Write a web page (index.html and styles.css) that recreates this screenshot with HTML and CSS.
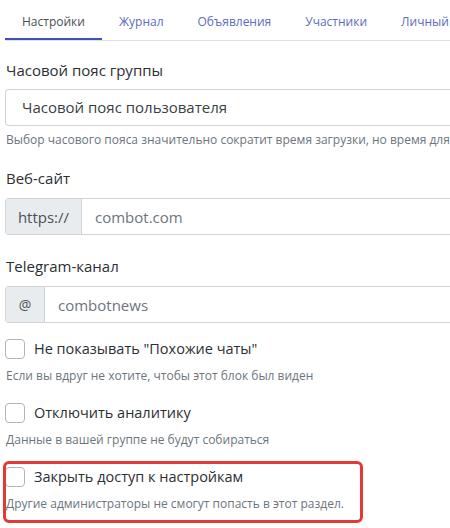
FILE: index.html
```html
<!DOCTYPE html>
<html lang="ru">
<head>
<meta charset="utf-8">
<link rel="stylesheet" href="styles.css">
</head>
<body>
<div class="page">
  <nav class="tabs">
    <a class="tab active">Настройки</a>
    <a class="tab">Журнал</a>
    <a class="tab">Объявления</a>
    <a class="tab">Участники</a>
    <a class="tab">Личный</a>
  </nav>

  <div class="group g-tz">
    <div class="label">Часовой пояс группы</div>
    <div class="select">Часовой пояс пользователя</div>
    <div class="help">Выбор часового пояса значительно сократит время загрузки, но время для</div>
  </div>

  <div class="group g-web">
    <div class="label">Веб-сайт</div>
    <div class="input-group">
      <span class="prefix p-https">https://</span>
      <span class="field">combot.com</span>
    </div>
  </div>

  <div class="group g-tg">
    <div class="label">Telegram-канал</div>
    <div class="input-group">
      <span class="prefix p-at">@</span>
      <span class="field f-at">combotnews</span>
    </div>
  </div>

  <div class="check c1">
    <div class="check-row"><span class="box"></span><span class="check-label">Не показывать "Похожие чаты"</span></div>
    <div class="help">Если вы вдруг не хотите, чтобы этот блок был виден</div>
  </div>

  <div class="check c2">
    <div class="check-row"><span class="box"></span><span class="check-label">Отключить аналитику</span></div>
    <div class="help">Данные в вашей группе не будут собираться</div>
  </div>

  <div class="check c3">
    <div class="check-row"><span class="box"></span><span class="check-label">Закрыть доступ к настройкам</span></div>
    <div class="help">Другие администраторы не смогут попасть в этот раздел.</div>
    <div class="highlight"></div>
  </div>
</div>
</body>
</html>
```

FILE: styles.css
```css
* { box-sizing: border-box; }
html, body { margin: 0; padding: 0; background: #fff; }
body {
  font-family: "Open Sans", "Noto Sans", sans-serif;
  color: #2b2f33;
  width: 450px;
  height: 528px;
  overflow: hidden;
}
.page { padding-left: 5px; }

.tabs {
  display: flex;
  border-bottom: 1px solid #dee2e6;
  white-space: nowrap;
  width: 600px;
}
.tab {
  font-size: 12px;
  line-height: 20px;
  padding: 12px 17px 6px;
  border-bottom: 2px solid transparent;
  color: #5c6bc0;
}
.tab.active {
  color: #495057;
  border-bottom-color: #3f51b5;
}

.group { margin-top: 18px; }
.label {
  font-size: 15px;
  line-height: 22px;
  margin-left: 1px;
}
.select {
  margin-top: 8px;
  height: 37px;
  border: 1px solid #ced4da;
  border-right: none;
  border-radius: 4px 0 0 4px;
  font-size: 15px;
  line-height: 35px;
  padding-left: 16px;
  width: 460px;
  color: #3a3f44;
}
.help {
  font-size: 12px;
  line-height: 18px;
  color: #6c757d;
  margin-top: 5px;
  white-space: nowrap;
  margin-left: 1px;
}

.g-web { margin-top: 18px; }
.g-tg { margin-top: 20px; }
.input-group {
  margin-top: 9px;
  display: flex;
  height: 37px;
  width: 460px;
  border: 1px solid #ced4da;
  border-right: none;
  border-radius: 4px 0 0 4px;
}
.prefix {
  background: #e9ecef;
  border-right: 1px solid #ced4da;
  display: flex;
  align-items: center;
  justify-content: center;
  color: #495057;
  font-size: 15px;
}
.p-https { width: 76px; }
.p-at { width: 39px; font-size: 14px; }
.field {
  display: flex;
  align-items: center;
  padding-left: 13px;
  font-size: 15px;
  color: #6c757d;
}

.check { margin-top: 15px; position: relative; }
.check-row {
  display: flex;
  align-items: center;
  height: 22px;
}
.box {
  width: 20px;
  height: 20px;
  border: 1.5px solid #adb5bd;
  border-radius: 4px;
  background: #fff;
  flex: none;
}
.check-label {
  font-size: 14.5px;
  margin-left: 9px;
  line-height: 22px;
}
.check .help { margin-top: 7px; }
.c2 { margin-top: 17px; }
.c3 { margin-top: 17px; }

.highlight {
  position: absolute;
  left: -2px;
  top: -5px;
  width: 360px;
  height: 62px;
  border: 3px solid #e53935;
  border-radius: 6px;
  pointer-events: none;
}
```
